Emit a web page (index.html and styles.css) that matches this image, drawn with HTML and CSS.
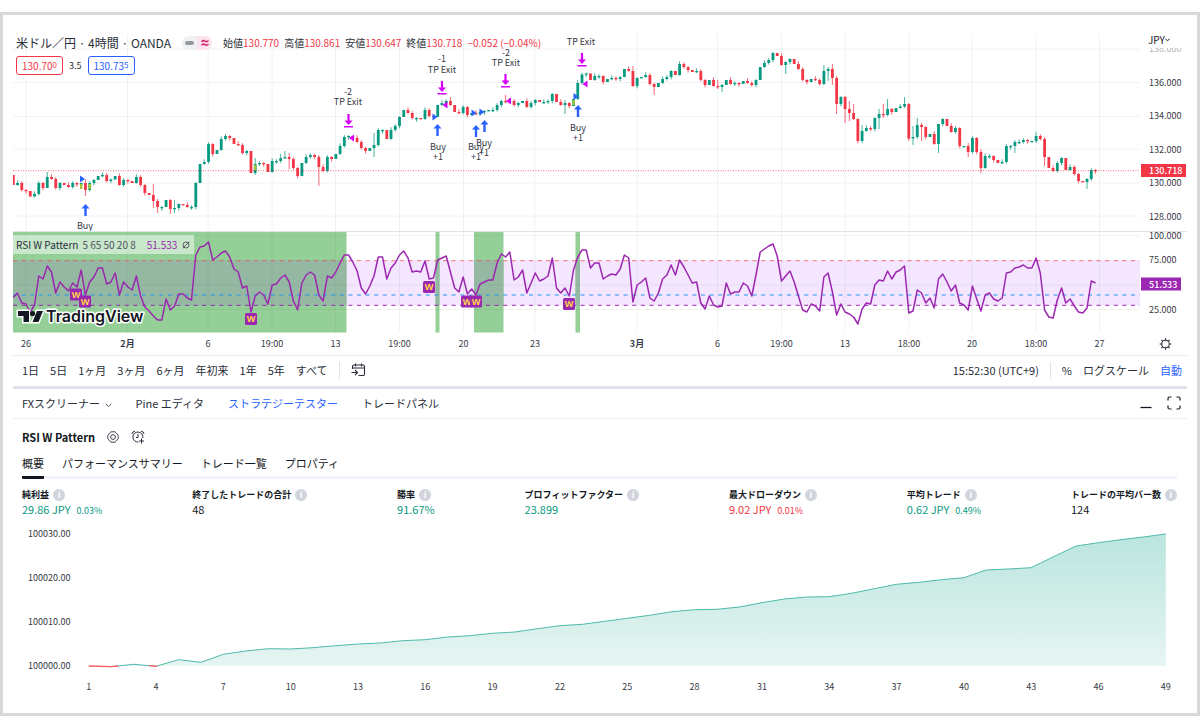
FILE: index.html
```html
<!DOCTYPE html>
<html lang="ja">
<head>
<meta charset="utf-8">
<title>米ドル／円 - TradingView</title>
<link rel="stylesheet" href="styles.css">
</head>
<body>
<main class="frame">
  <section class="pane" aria-label="価格チャート">
    <svg id="price" class="plot" viewBox="13 31 1174 201"></svg>
    <div class="price-legend">
      <div class="symbol-row">
        <h1 class="symbol">米ドル／円 · 4時間 · OANDA</h1>
        <span class="status">
          <span class="status-part"><svg width="9" height="4" viewBox="0 0 9 4"><rect width="9" height="4" rx="2" fill="#9598a1"/></svg></span>
          <span class="status-part status-pink"><svg width="8" height="8" viewBox="0 0 8 8" fill="none" stroke="#d6246e" stroke-width="1.5"><path d="M.5 2.8Q2.3.8 4 2.2T7.5 1.5M.5 6.3Q2.3 4.3 4 5.7T7.5 5"/></svg></span>
        </span>
        <span class="ohlc">
          <span>始値<b>130.770</b></span>
          <span>高値<b>130.861</b></span>
          <span>安値<b>130.647</b></span>
          <span>終値<b>130.718</b></span>
          <b>−0.052 (−0.04%)</b>
        </span>
      </div>
      <div class="quote-row">
        <button class="quote sell" type="button">130.70<small>0</small></button>
        <span class="spread">3.5</span>
        <button class="quote buy" type="button">130.73<small>5</small></button>
      </div>
    </div>
    <div class="currency">
      <select class="currency-select" aria-label="通貨"><option>JPY</option></select>
      <svg width="5" height="4" viewBox="0 0 5 4" fill="none" stroke="#131722"><path d="M.5 1l2 1.6L4.500 1"/></svg>
    </div>
  </section>

  <section class="pane" aria-label="RSI">
    <svg id="rsi" class="plot" viewBox="13 232 1174 123"></svg>
    <div class="rsi-legend">
      <span>RSI W Pattern</span><span class="params">5 65 50 20 8</span>
      <span class="rsi-value">51.533</span>
      <svg width="8" height="8" viewBox="0 0 8 8" fill="none" stroke="#50535e" stroke-width=".9"><circle cx="4" cy="4" r="3"/><path d="M.6 7.400L7.400.6"/></svg>
    </div>
  </section>

  <nav class="toolbar" aria-label="期間">
    <button type="button">1日</button>
    <button type="button">5日</button>
    <button type="button">1ヶ月</button>
    <button type="button">3ヶ月</button>
    <button type="button">6ヶ月</button>
    <button type="button">年初来</button>
    <button type="button">1年</button>
    <button type="button">5年</button>
    <button type="button">すべて</button>
    <span class="divider"></span>
    <button type="button" aria-label="日付へ移動">
      <svg width="15" height="14" viewBox="0 0 15 14" fill="none" stroke="#2a2e39" stroke-width="1.1"><path d="M1.500 6V3.500a1.500 1.500 0 0 1 1.500-1.500h9a1.500 1.500 0 0 1 1.500 1.500v7.500a1.500 1.500 0 0 1-1.500 1.500H7.500M1.500 5h12M4.500.500v3M10.500.500v3M.500 9.500H6M4 7l2.500 2.500L4 12"/></svg>
    </button>
    <span class="clock">15:52:30 (UTC+9)</span>
    <span class="divider"></span>
    <button type="button">%</button>
    <button class="scale" type="button">ログスケール</button>
    <button class="on" type="button">自動</button>
  </nav>

  <nav class="panel-tabs" aria-label="パネル">
    <button type="button">FXスクリーナー
      <svg class="caret" width="7" height="5" viewBox="0 0 7 5" fill="none" stroke="#50535e"><path d="M.7 1l2.800 2.500L6.300 1"/></svg>
    </button>
    <button type="button">Pine エディタ</button>
    <button class="on" type="button">ストラテジーテスター</button>
    <button type="button">トレードパネル</button>
    <span class="window-tools">
      <button type="button" aria-label="最小化"><svg width="12" height="14" viewBox="0 0 12 14"><path d="M.500 11.500h11" stroke="#131722" stroke-width="1.300"/></svg></button>
      <button type="button" aria-label="最大化"><svg width="14" height="14" viewBox="0 0 14 14" fill="none" stroke="#131722" stroke-width="1.200"><path d="M1 4.500V2.500Q1 1 2.500 1h2M9.500 1h2Q13 1 13 2.500v2M13 9.500v2q0 1.500-1.500 1.500h-2M4.500 13h-2Q1 13 1 11.500v-2"/></svg></button>
    </span>
  </nav>

  <section class="tester">
    <header class="tester-head">
      <h2>RSI W Pattern</h2>
      <button type="button" aria-label="設定"><svg width="12" height="12" viewBox="0 0 12 12" fill="none" stroke="#2a2e39" stroke-width=".9"><path d="M4 .8h4l1.400 1.300 1.800 2.400v3L9.400 9.900 8 11.200H4L2.600 9.900.8 7.500v-3l1.800-2.400z"/><circle cx="6" cy="6" r="2.400"/></svg></button>
      <button type="button" aria-label="アラート"><svg width="14" height="14" viewBox="0 0 14 14" fill="none" stroke="#2a2e39"><path d="M11.800 8A5 5 0 1 0 7.500 12M7 4v3.500H5M1 4Q1 1.500 4 1.200M10 1.200Q13 1.500 13 4M10.500 8.500v5M8 11h5"/></svg></button>
    </header>
    <nav class="report-tabs" aria-label="レポート">
      <button class="current" type="button">概要</button>
      <button type="button">パフォーマンスサマリー</button>
      <button type="button">トレード一覧</button>
      <button type="button">プロパティ</button>
    </nav>
    <dl class="metrics">
      <div><dt>純利益<i class="info">i</i></dt><dd class="up">29.86 JPY<small>0.03%</small></dd></div>
      <div><dt>終了したトレードの合計<i class="info">i</i></dt><dd>48</dd></div>
      <div><dt>勝率<i class="info">i</i></dt><dd class="up">91.67%</dd></div>
      <div><dt>プロフィットファクター<i class="info">i</i></dt><dd class="up">23.899</dd></div>
      <div><dt>最大ドローダウン<i class="info">i</i></dt><dd class="down">9.02 JPY<small>0.01%</small></dd></div>
      <div><dt>平均トレード<i class="info">i</i></dt><dd class="up">0.62 JPY<small>0.49%</small></dd></div>
      <div><dt>トレードの平均バー数<i class="info">i</i></dt><dd>124</dd></div>
    </dl>
  </section>
  <svg id="equity" class="plot" viewBox="13 520 1174 180"></svg>
</main>
<script src="chart.js"></script>
</body>
</html>
```

FILE: styles.css
```css
* { box-sizing: border-box; }

body {
  margin: 0;
  padding-top: 12px;
  background: #fff;
  color: #131722;
  font: 11px/16px "Noto Sans CJK JP", "Noto Sans", sans-serif;
}

button {
  padding: 0;
  border: 0;
  background: none;
  color: inherit;
  font: inherit;
  white-space: nowrap;
  cursor: pointer;
}

button svg { display: block; }

h1, h2, dl, dd { margin: 0; }

.frame {
  padding: 16px 10px 12px;
  border: 3px solid #d9d9d9;
}

.pane { position: relative; }

.plot {
  display: block;
  width: 100%;
  height: auto;
}

/* Price legend, laid over the chart */
.price-legend {
  position: absolute;
  top: 4px;
  left: 3px;
  color: #2a2e39;
}

.symbol-row {
  display: flex;
  align-items: center;
  gap: 11px;
  height: 16px;
}

.symbol {
  font-size: 12px;
  font-weight: 400;
  white-space: nowrap;
}

.status {
  display: flex;
  overflow: hidden;
  border-radius: 7px;
}

.status-part {
  display: flex;
  align-items: center;
  justify-content: center;
  width: 15px;
  height: 14px;
  background: #f0f1f3;
}

.status-pink { background: #fce4ee; }

.ohlc {
  display: flex;
  gap: 5px;
  font-size: 10px;
  white-space: nowrap;
}

.ohlc b {
  color: #f23645;
  font-weight: 400;
}

.quote-row {
  display: flex;
  align-items: center;
  gap: 6px;
  margin-top: 5px;
}

.quote {
  width: 47px;
  height: 19px;
  border: 1px solid currentColor;
  border-radius: 3px;
  background: #fff;
  font-size: 10px;
  line-height: 16px;
}

.quote small {
  font-size: 8px;
  line-height: 8px;
  vertical-align: 2px;
}

.sell { color: #f23645; }
.buy { color: #2962ff; }
.spread { font-size: 9px; }

.currency {
  position: absolute;
  top: 2px;
  right: 17px;
  display: flex;
  align-items: center;
  background: #fff;
}

.currency-select {
  width: 17px;
  padding: 0;
  border: 0;
  background: none;
  color: #131722;
  font: inherit;
  font-size: 10px;
  line-height: 14px;
  appearance: none;
}

.rsi-legend {
  position: absolute;
  top: 3px;
  left: 0;
  display: flex;
  align-items: center;
  width: 181px;
  height: 19px;
  padding-left: 3px;
  background: rgba(255, 255, 255, .5);
  color: #2a2e39;
  font-size: 10px;
  white-space: nowrap;
}

.params {
  margin-left: 4px;
  color: #50535e;
}

.rsi-value {
  margin: 0 5px 0 11px;
  color: #9c27b0;
}

/* Text drawn in the charts */
.axis { font-size: 9px; fill: #363a45; }
.axis-strong { font-weight: 700; }
.middle { text-anchor: middle; }
.tag { font-size: 9px; font-weight: 500; fill: #fff; }
.signal { font-size: 9px; fill: #363a45; text-anchor: middle; }
.badge { font: 700 9px "Noto Sans", sans-serif; fill: #ffd24a; text-anchor: middle; }

.wordmark {
  font: 600 16px Inter, sans-serif;
  fill: #131722;
  stroke: #fff;
  stroke-width: 3px;
  stroke-linejoin: round;
  paint-order: stroke;
}

/* Date range bar */
.toolbar {
  display: flex;
  align-items: center;
  gap: 11px;
  height: 31px;
  padding: 0 5px 2px 9px;
  border-top: 1px solid #e6e8ef;
  color: #2a2e39;
}

.divider {
  width: 1px;
  height: 17px;
  background: #e0e3eb;
}

.clock { margin-left: auto; }
.toolbar .on, .panel-tabs .on { color: #2962ff; }

.panel-tabs {
  display: flex;
  align-items: center;
  gap: 24px;
  height: 33px;
  padding: 0 6px 2px 9px;
  border-top: 3px solid #e0e3eb;
  border-bottom: 1px solid #eceef5;
  color: #2a2e39;
}

.panel-tabs .caret {
  display: inline-block;
  margin-left: 2px;
}

.window-tools {
  display: flex;
  gap: 15px;
  margin-left: auto;
}

/* Strategy tester */
.tester { padding: 0 10px 0 9px; }

.tester-head {
  display: flex;
  align-items: center;
  gap: 12px;
  padding-top: 10px;
}

.tester-head h2 {
  font-size: 11px;
  line-height: 16px;
}

.report-tabs {
  display: flex;
  gap: 18px;
  height: 34px;
  border-bottom: 3px solid #f0f3fa;
}

.report-tabs button {
  height: 34px;
  padding-top: 4px;
  border-bottom: 3px solid transparent;
}

.report-tabs .current {
  border-color: #131722;
  border-radius: 1px;
}

.metrics {
  display: flex;
  justify-content: space-between;
  padding: 8px 0 3px;
}

.metrics dt {
  display: flex;
  align-items: center;
  gap: 4px;
  font-size: 9px;
  font-weight: 600;
  line-height: 15px;
  white-space: nowrap;
}

.info {
  display: inline-flex;
  align-items: center;
  justify-content: center;
  width: 12px;
  height: 12px;
  border-radius: 50%;
  background: #d1d4dc;
  color: #fff;
  font: 700 9px/12px "Noto Sans", sans-serif;
}

.metrics dd {
  line-height: 14px;
  white-space: nowrap;
}

.metrics small {
  margin-left: 6px;
  font-size: 9px;
}

.up { color: #089981; }
.down { color: #f23645; }
```

FILE: chart.js
```javascript
const STEP = 4.244;
const xAt = i => 13.3 + STEP * i;
const GREEN = '#089981', RED = '#f23645', PURPLE = '#9c27b0', BLUE = '#2962ff', PINK = '#d500f9';
const GRID_X = [26, 127.5, 208, 272, 335.5, 399.5, 463.5, 535, 637, 717.5, 781.5, 845, 909, 972, 1036, 1099.5];
const DATES = ['26', '2月', '6', '19:00', '13', '19:00', '20', '23', '3月', '6', '19:00', '13', '18:00', '20', '18:00', '27'];

const rect = (x, y, w, h, fill, extra = '') => `<rect x="${x}" y="${y}" width="${w}" height="${h}" fill="${fill}" ${extra}/>`;
const line = (x1, y1, x2, y2, stroke, extra = '') => `<path d="M${x1} ${y1}L${x2} ${y2}" stroke="${stroke}" fill="none" ${extra}/>`;
const text = (x, y, cls, s) => `<text x="${x}" y="${y}" class="${cls}">${s}</text>`;

/* Price: vertical position of each bar's close; a bar opens at the previous close */
const closes = [185,183,190,191,196.5,194,183,188,177,179,188,183,185,187,183,184.5,183,190,183,180,176,175,181,179.5,176,185,180,181,183,177,185,193,195,201,207,207,200,209,208,204,205,207,207,183,164,162,144,154,150,139,136,138,144,145,153,151,173,164,163,164,172,161,161,158,157,159,168,176,
163,157,155,157,167,171,157,159,154,146,137,136,138,142,148,151,148,145,130,130,139,130,126,117,110,113,118,118,119,110,116,117,105,103,101,105,112,113,107,115,113,114,112,111,110,110,105,101,102,101,105,103,101,107,103,100,102,102,101,94,102,105,103,106,99,83,74.5,73.5,80,76,76,
82,79,78,79,77,69,71,86,78,77,75,84,87,83,79,77,71,75,64,67,70,72,71,80,85,80,86,87,85,80,84,83,84,81,83,85,80,67,63,60,53,56,65,62,59,64,69,80,82,79,80,84,71,69,78,104,97,109,113,119,141,131,128,129,118,114,115,109,112,108,106.5,
104,138.5,137,125,127,137,134,144,124,119,126,132,128,146,146,152,138,152,168,156,156,160,163,162,146,146,142,142,140,141,141,136,139,157,168,171,163,158,170,167,174,181,182,179,170,171];
/* Long wicks: bar -> [high, low] */
const wicks = {8:[172,188],17:[179,196],33:[184,208],34:[199,213],37:[199,214],38:[200,213],57:[158,175],63:[154,163],64:[151,159],65:[153,169],72:[155,186],85:[133,157],116:[95,103],130:[100,114],103:[97,106],146:[66,87],151:[83,95],166:[80,89],167:[84,92],182:[61,74],191:[65,85],192:[67,81],193:[64,85],194:[76,114],196:[96,123],197:[101,121],198:[104,120],200:[125,143],204:[109,129],205:[104,118],206:[99,116],210:[97,108],212:[126,145],213:[118,139],214:[123,141],218:[124,153],225:[143,157],228:[149,173],236:[140,153],241:[132,143],243:[137,166],253:[178,189]};

let p = '';
[49, 82.5, 116.5, 149, 183, 216].forEach(y => p += line(13, y, 1140, y, '#f1f2f4'));
GRID_X.forEach(x => p += line(x, 34, x, 231, '#f1f2f4'));
closes.forEach((close, i) => {
  const open = i ? closes[i - 1] : 175;
  const color = close > open || i === 255 ? RED : GREEN;
  const top = Math.min(open, close), height = Math.max(1.3, Math.abs(open - close));
  const [high, low] = wicks[i] || [top - (i * 7 % 4) * .9, top + height + (i * 5 % 4) * .8];
  p += line(xAt(i), high, xAt(i), low, color, 'opacity=".75"') + rect(xAt(i) - 1.4, top, 2.8, height, color);
});
[16, 18, 57, 132].forEach(i => p += rect(xAt(i) - 1.2, Math.min(closes[i], closes[i - 1]) + 1, 2.4, 5, '#a4c639'));
p += line(13, 170.7, 1140, 170.7, RED, 'stroke-dasharray="1 1.500" opacity=".7"');

const up = (x, y) => `<path d="M${x} ${y}l4 4.500h-2.800v7.500h-2.400v-7.500h-2.800z" fill="${BLUE}"/>`;
const down = (x, y) => `<path d="M${x - 1.1} ${y}h2.200v6.500h2.900l-4 4.500-4-4.500h2.900zM${x - 4.500} ${y + 12}h9v1.500h-9z" fill="${PINK}"/>`;
[[85.5, 204], [437.5, 124], [476, 125], [484.5, 120], [578, 105]].forEach(a => p += up(...a));
[[348.5, 114], [442, 81], [505.5, 74], [582, 53]].forEach(a => p += down(...a));
[[80, 179], [432.500, 117], [471.500, 113], [479.500, 112], [573.500, 96.500]].forEach(([x, y]) => p += `<path d="M${x} ${y - 3.500}l5 3.500-5 3.500z" fill="${BLUE}"/>`);
[[349, 138], [442.500, 105], [506, 101], [582.500, 84]].forEach(([x, y]) => p += `<path d="M${x + 5} ${y - 3.500}l-5 3.500 5 3.500z" fill="${PINK}"/>`);
[[85, 229, 'Buy'], [348, 95, '-2'], [348, 105, 'TP Exit'], [442, 62, '-1'], [442, 73, 'TP Exit'], [506, 56, '-2'], [506, 66, 'TP Exit'], [581, 45, 'TP Exit'],
 [438, 150, 'Buy'], [438, 160, '+1'], [476, 150, 'Buy'], [476, 160, '+1'], [484, 146, 'Buy'], [484, 156, '+1'], [578, 131, 'Buy'], [578, 141, '+1']]
  .forEach(([x, y, s]) => p += text(x, y, 'signal', s));

p += text(1149, 52, 'axis', '138.000') + rect(1141, 40, 46, 8, '#fff') + rect(1141, 48, 46, 6, '#fff', 'opacity=".6"');
[[86, '136.000'], [119, '134.000'], [153, '132.000'], [186, '130.000'], [220, '128.000']].forEach(([y, s]) => p += text(1149, y, 'axis', s));
p += rect(1141, 164, 45, 13, RED) + text(1149, 174, 'tag', '130.718');
p += line(13, 231.5, 1187, 231.5, '#e0e3eb');
document.getElementById('price').innerHTML = p;

/* RSI */
const rsi = [297.5,293,303,304,312,305,276,279,266,272,293,282,287,291,283,287,270,295,282,277,268,268,284,282,273,295,282,287,290,276,296,307,311,316,320,320,299,310,306,294,294,298,300,255,247,246,242,260,257,253,251,257,269,272,288,286,312,296,292,295,304,285,284,278,275,282,301,310,
283,275,272,275,295,301,276,278,272,263,255,255,262,271,288,294,286,276,257,257,279,268,263,255,251,258,272,271,272,261,279,278,260,258,256,272,288,292,277,294,289,295,284,282,280,280,263,254,257,252,280,277,270,293,283,273,281,279,276,258,288,293,288,296,270,257,250,250,268,263,263,
279,276,274,275,269,255,258,302,285,282,278,298,301,293,279,275,265,275,260,267,275,283,282,303,309,296,305,307,306,283,294,292,292,283,286,296,275,252,249,246,244,256,281,276,271,282,296,310,312,304,306,311,277,273,292,315,304,312,314,317,324,309,303,304,285,280,281,271,279,272,270,
266,313,311,290,293,303,298,308,279,274,282,291,285,303,305,310,286,299,311,295,293,299,301,298,273,272,268,267,265,268,268,258,273,310,317,318,300,288,303,299,306,312,313,308,281,283];
const ZONES = [[13, 333.5], [435.5, 4], [474, 29.5], [575.5, 4.5]];

let r = rect(13, 260, 1127, 45.500, '#f4e6ff');
ZONES.forEach(([x, w]) => r += rect(x, 232, w, 100.500, '#93cf96') + rect(x, 260, w, 45.500, '#94b8a2'));
[235.5, 285, 309.5].forEach(y => r += line(13, y, 1140, y, '#5d606b', 'opacity=".08"'));
GRID_X.forEach(x => r += line(x, 232, x, 332, '#5d606b', 'opacity=".08"'));
r += line(13, 260.7, 1140, 260.7, '#f44336', 'stroke-width="1.300" stroke-dasharray="4 4.600" opacity=".55"');
r += line(13, 295, 1140, 295, '#2196f3', 'stroke-width="1.300" stroke-dasharray="4 4.600" opacity=".65"');
r += line(13, 305.3, 1140, 305.3, PURPLE, 'stroke-dasharray="4 4.600"');
r += `<polyline fill="none" stroke="${PURPLE}" stroke-width="1.500" stroke-linejoin="round" points="${rsi.map((y, i) => `${xAt(i).toFixed(1)},${y}`).join(' ')}"/>`;
[[76, 294.5], [85, 301.5], [251, 319], [429, 287], [467, 301.5], [476, 301.5], [569, 304]].forEach(([x, y]) =>
  r += rect(x - 6, y - 6, 12, 12, PURPLE, 'rx="1.500"') + text(x, y + 3, 'badge', 'W'));
r += `<path d="M18 311h11v11h-5.500v-6H18zM37 311h6l-4.500 11h-6z" fill="#131722" stroke="#fff" stroke-width="3" paint-order="stroke"/><circle cx="32.500" cy="313.500" r="2.600" fill="#131722"/>`;
r += text(46, 322, 'wordmark', 'TradingView');
DATES.forEach((s, i) => r += text(GRID_X[i], 347, 'axis middle' + (s.endsWith('月') ? ' axis-strong' : ''), s));
[[239, '100.000'], [263, '75.000'], [313, '25.000']].forEach(([y, s]) => r += text(1149, y, 'axis', s));
r += rect(1141, 277.5, 40, 13, PURPLE) + text(1149, 287.5, 'tag', '51.533');
r += `<g transform="translate(1165.500 344)" fill="none" stroke="#2a2e39" stroke-width="1.100"><circle r="3.800"/>${[0, 45, 90, 135, 180, 225, 270, 315].map(a => `<path d="M0-4v-1.800" transform="rotate(${a})"/>`).join('')}</g>`;
document.getElementById('rsi').innerHTML = r;

/* Equity curve */
const equity = [665,665.7,663.3,665.3,658.7,661.3,653.3,650,647.7,648,646.7,644.7,643,642,639.7,638.7,636,634.7,632.3,631,627.7,624.7,623.3,620.3,617.3,614.3,610.7,608.7,608.3,606,601.7,598,596,595.7,592.3,587.7,583.3,581.3,578.7,576.7,569,568,566.7,555.7,545,541.7,538.7,536,533];
const ex = n => (88.7 + n * 22.44).toFixed(1);
const pts = equity.map((y, n) => `${ex(n)},${y}`);
let e = '<defs><linearGradient id="fade" x2="0" y2="1"><stop stop-color="#bae5de"/><stop offset="1" stop-color="#e7f5f3"/></linearGradient></defs>';
e += `<polygon fill="url(#fade)" points="${ex(0)},665 ${pts.join(' ')} ${ex(48)},665"/>`;
e += `<polyline fill="none" stroke="#4dbbaa" points="${pts.slice(1).join(' ')}"/>`;
e += `<path fill="none" stroke="#ff5b66" stroke-width="1.300" d="M${pts[0]}L${pts[1]}l7-.700M149 664.700L${pts[3]}l1.500-.500"/>`;
[[536, '100030.00'], [580, '100020.00'], [624, '100010.00'], [668, '100000.00']].forEach(([y, s]) => e += text(28, y, 'axis', s));
for (let n = 0; n < 49; n += 3) e += text(ex(n), 689, 'axis middle', n + 1);
document.getElementById('equity').innerHTML = e;
```
